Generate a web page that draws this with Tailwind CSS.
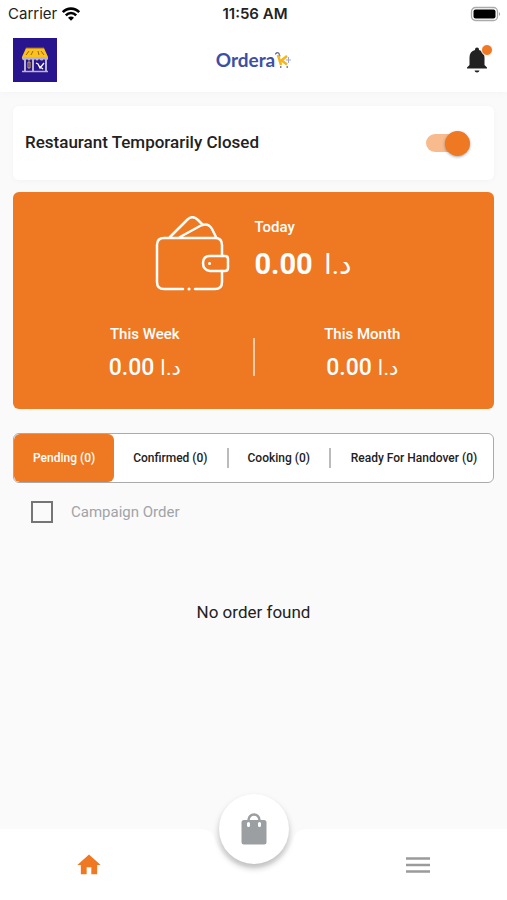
<!DOCTYPE html>
<html lang="en">
<head>
<meta charset="utf-8">
<meta name="viewport" content="width=device-width, initial-scale=1">
<title>Orderak</title>
<script src="https://cdn.jsdelivr.net/npm/@tailwindcss/browser@4"></script>
</head>
<body class="flex min-h-dvh flex-col bg-[#fafafa] font-['Roboto','DejaVu_Sans',sans-serif] text-[#222]">
<header class="bg-white shadow-[0_1px_8px_rgba(0,0,0,0.03)]">
  <div class="grid h-7 grid-cols-3 items-center pr-[5px] pl-2 font-['Inter',sans-serif] text-[15px]">
    <div class="flex items-center gap-1">
      <span>Carrier</span>
      <svg class="h-4 w-5" viewBox="0 0 20 16" fill="none" stroke="#000" stroke-width="2.6" aria-hidden="true">
        <path d="M1.8 6.2C6.4 1.4 13.6 1.4 18.2 6.2"/><path d="M4.8 9.3c3-3 7.400-3 10.400 0"/><path d="M10 14.800 7 11.700c1.700-1.500 4.300-1.500 6 0z" fill="#000" stroke="none"/>
      </svg>
    </div>
    <span class="text-center font-semibold whitespace-nowrap">11:56 AM</span>
    <svg class="h-4 w-8 justify-self-end" viewBox="0 0 32 16" aria-hidden="true">
      <rect x="1.500" y="1.500" width="26" height="13" rx="4" fill="#fff" stroke="#aaa" stroke-width="1.300"/><rect x="3.500" y="3.500" width="22" height="9" rx="2" fill="#000"/><path d="M29 6v4q2-2 0-4z" fill="#999"/>
    </svg>
  </div>
  <div class="grid h-16 grid-cols-3 items-center px-[13px]">
    <svg class="h-11 w-11" viewBox="0 0 44 44" role="img" aria-label="Store">
      <path fill="#28148c" d="M0 0h44v44H0z"/>
      <path fill="#fcc21b" d="M13 10h18l4 9H9z"/>
      <path d="M13 10h18M16 13l-3 4M20 13l-2 4M25 13l1 4M28 13l3 4" stroke="#9a641b" stroke-width="1" fill="none"/>
      <path d="M9 19h26v2q-2 3-4 0-2 3-5 0-2 3-4 0-2 3-4 0-2 3-4 0-2 3-5 0z" fill="#b9b3d0"/>
      <path d="M12 22v11M20 22v11M33 22v11" stroke="#b9b3d0" stroke-width="2"/>
      <path d="M9 33.500h26" stroke="#b9b3d0" stroke-width="1.500"/>
      <path d="M15 24h2v6h-2z" fill="none" stroke="#d5b05e"/>
      <path d="M23 25l2 1 2 4 4-5M26 28l4 3" stroke="#fff" stroke-width="1.300" fill="none"/>
    </svg>
    <div class="flex items-center justify-center font-['Lato',sans-serif] text-[19px] leading-6 font-bold text-[#3c4fa5]" aria-label="Orderak">
      <span>Ordera</span>
      <svg class="h-5 w-4" viewBox="0 0 16 20" fill="none" aria-hidden="true">
        <path d="M0 4.500q2-3 4-1l1 3" stroke="#69728f" stroke-width="1.300"/><path d="M3 5l3 10M4.500 12 12 6M6 10l6 4.500" stroke="#f8b51b" stroke-width="2.600"/><path d="M11 10h5M13.500 7v6" stroke="#9fa7cf" stroke-width="1"/><path d="M5 17h1.500M11.500 17H13" stroke="#536184" stroke-width="1.500"/>
      </svg>
    </div>
    <button type="button" class="relative mr-[3px] size-7 justify-self-end" aria-label="Notifications">
      <svg class="size-7" viewBox="0 0 28 28" fill="#222" aria-hidden="true"><path d="M14 26.500a2.500 2.500 0 0 0 2.500-2h-5a2.500 2.500 0 0 0 2.500 2zM21.500 19v-7.500c0-4-2-6.500-5.500-7.400V3.500a2 2 0 0 0-4 0v.6C8.500 5 6.500 7.500 6.500 11.500V19L4 21.500v1h20v-1z"/></svg>
      <span class="absolute -right-0.5 -top-0.5 size-3 rounded-full border border-white bg-[#ef7822]"></span>
    </button>
  </div>
</header>

<main class="flex-1 px-[13px] pt-3.5 pb-20">
  <label class="flex h-[74px] items-center justify-between rounded-md bg-white pl-3 pr-6 shadow-[0_1px_6px_rgba(0,0,0,0.03)]">
    <span class="text-[17px] font-medium">Restaurant Temporarily Closed</span>
    <span class="relative flex h-7 w-11 items-center">
      <input type="checkbox" role="switch" checked class="peer h-[18px] w-10 appearance-none rounded-full bg-[#f8bb8e]">
      <span class="pointer-events-none absolute right-0 size-[25px] rounded-full bg-[#ef7822] shadow-[0_1px_3px_rgba(0,0,0,0.35)]"></span>
    </span>
  </label>

  <section class="mt-3 rounded-md bg-[#ef7822] px-6 pt-6 pb-[26px] text-white">
    <div class="flex items-start justify-center gap-6">
      <svg class="h-[75px] w-[75px]" viewBox="0 0 75 75" fill="none" stroke="#fff" stroke-width="2.500" stroke-linecap="round" aria-hidden="true">
        <path d="M28 73H9q-7 0-7-7V29q0-7 7-7h51q7 0 7 7v11M67 55v11q0 7-7 7H40"/>
        <path d="M15 21 33 3q5-4 10 1l5 5M25 21 45 10q8-4 12 3l4 8"/>
        <path d="M70 40H55q-7 0-7 7t7 8h15q3 0 3-3v-9q0-3-3-3z"/>
        <path d="M34 73h.1M54.500 47.500h.1" stroke-width="3"/>
      </svg>
      <div>
        <h2 class="text-[15px] leading-[22px] font-medium">Today</h2>
        <p class="mt-2 text-[29px] leading-9 font-bold">0.00 <span lang="ar" class="ml-1 text-[28px] font-normal">د.ا</span></p>
      </div>
    </div>
    <div class="mt-8 flex items-center">
      <div class="flex-1 text-center">
        <h2 class="text-[15px] leading-[22px] font-medium">This Week</h2>
        <p class="mt-2 text-[23px] leading-[30px] font-medium">0.00 <span lang="ar" class="text-[21px] font-normal">د.ا</span></p>
      </div>
      <div class="mt-2 h-[38px] w-0.5 bg-[#f8c9a5]"></div>
      <div class="flex-1 text-center">
        <h2 class="text-[15px] leading-[22px] font-medium">This Month</h2>
        <p class="mt-2 text-[23px] leading-[30px] font-medium">0.00 <span lang="ar" class="text-[21px] font-normal">د.ا</span></p>
      </div>
    </div>
  </section>

  <div role="tablist" class="mt-6 flex h-[50px] items-stretch overflow-hidden rounded-md border border-[#aaa] bg-white text-xs font-medium whitespace-nowrap">
    <button type="button" role="tab" aria-selected="true" class="rounded-md bg-[#ef7822] px-[19px] text-white">Pending (0)</button>
    <button type="button" role="tab" aria-selected="false" class="px-[19px]">Confirmed (0)</button>
    <span class="h-5 w-0.5 shrink-0 self-center bg-[#bbb]"></span>
    <button type="button" role="tab" aria-selected="false" class="px-[19px]">Cooking (0)</button>
    <span class="h-5 w-0.5 shrink-0 self-center bg-[#bbb]"></span>
    <button type="button" role="tab" aria-selected="false" class="flex-1 pr-3.5 pl-[18px]">Ready For Handover (0)</button>
  </div>

  <label class="mt-[18px] ml-[18px] flex items-center gap-[18px] text-[15px] leading-[22px] text-[#a0a4a8]">
    <input type="checkbox" class="size-[22px] appearance-none border-2 border-[#757575]">
    <span>Campaign Order</span>
  </label>
  <p class="mt-[77px] text-center text-[17px] leading-6">No order found</p>
</main>

<nav class="sticky bottom-0 flex h-[71px]" aria-label="Main">
  <a href="#home" class="flex flex-1 items-center justify-center bg-white pr-5" aria-label="Home">
    <svg class="size-7" viewBox="0 0 24 24" fill="#ef7822" aria-hidden="true"><path d="M10 20v-6h4v6h5v-8h3L12 3 2 12h3v8z"/></svg>
  </a>
  <div class="relative w-[110px]">
    <svg class="h-full w-full" viewBox="0 0 110 71" preserveAspectRatio="none" fill="#fff" aria-hidden="true"><path d="M0 0C8 0 13 2 16 10 21 27 36 39 55 39S89 27 94 10C97 2 102 0 110 0v71H0z"/></svg>
    <a href="#orders" class="absolute -top-[35px] left-5 flex size-[70px] items-center justify-center rounded-full bg-white shadow-[0_4px_6px_rgba(0,0,0,0.25)]" aria-label="Orders">
      <svg class="h-8 w-7" viewBox="0 0 28 32" aria-hidden="true"><path d="M8.500 9V7a5.500 5.500 0 0 1 11 0v2" fill="none" stroke="#9b9fa1" stroke-width="2.500"/><rect x="1.500" y="7" width="25" height="24.500" rx="2.500" fill="#9b9fa1"/><path d="M8.500 10.500v2M19.500 10.500v2" stroke="#fff" stroke-width="3" stroke-linecap="round"/></svg>
    </a>
  </div>
  <a href="#menu" class="flex flex-1 items-center justify-center bg-white pl-5" aria-label="Menu">
    <svg class="h-4 w-6" viewBox="0 0 24 16" stroke="#9b9b9b" stroke-width="2.700" aria-hidden="true"><path d="M0 1.500h24M0 8h24M0 14.500h24"/></svg>
  </a>
</nav>
</body>
</html>
